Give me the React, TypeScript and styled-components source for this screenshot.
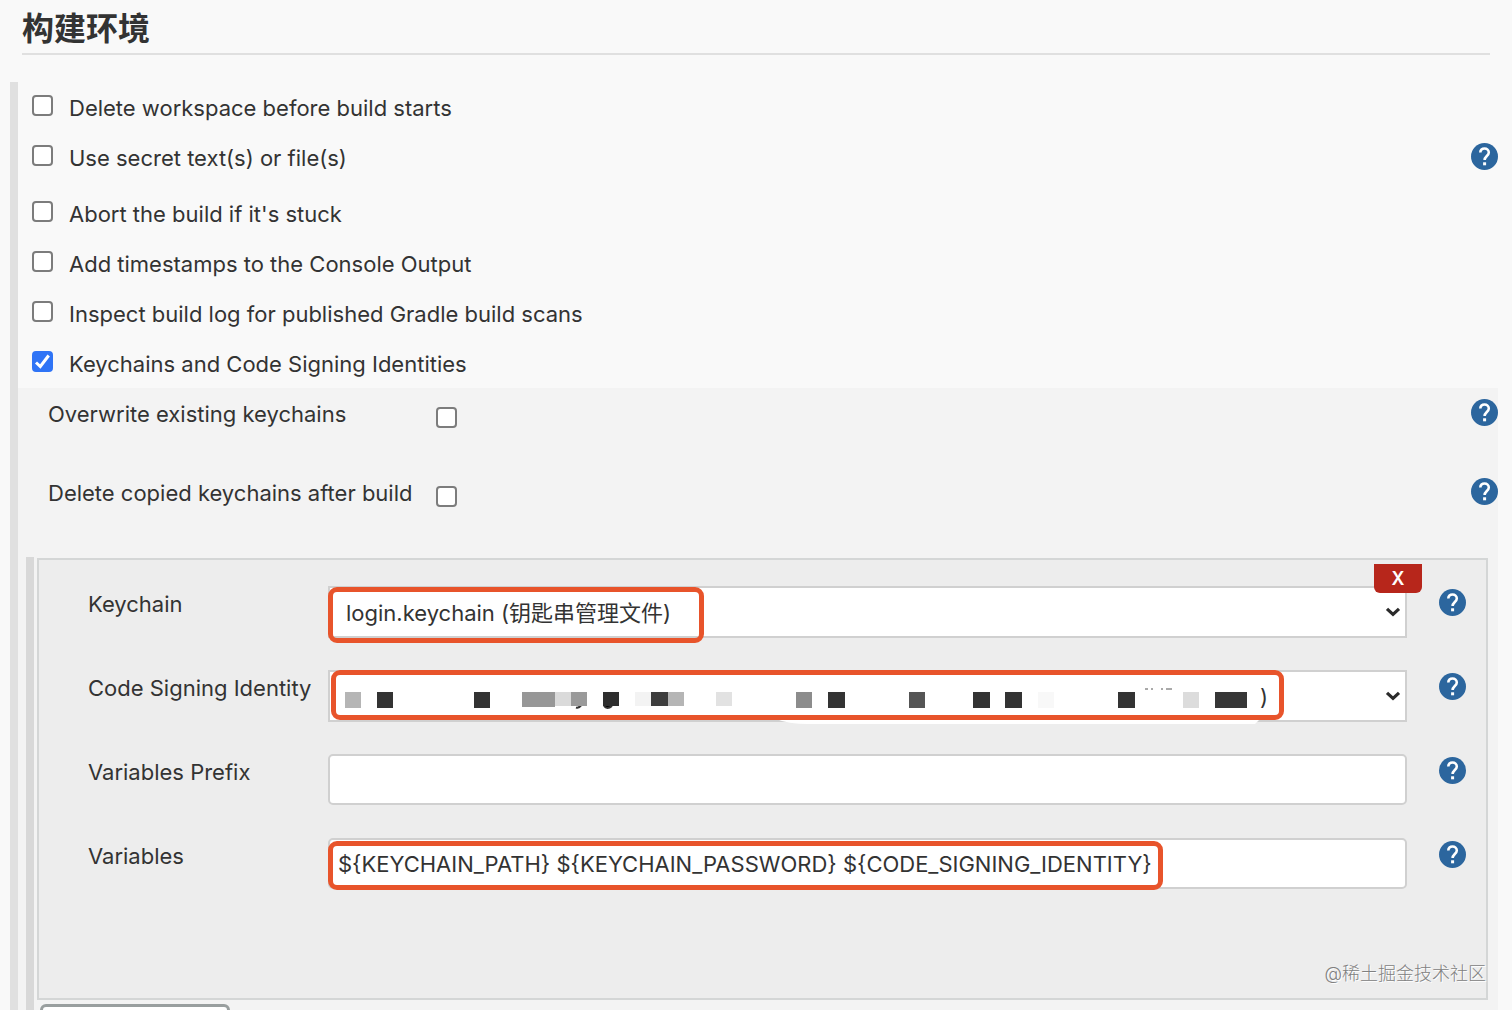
import React, { useState } from "react";
import styled, { createGlobalStyle } from "styled-components";

const GlobalStyle = createGlobalStyle`
  *, *::before, *::after { box-sizing: border-box; }
  body {
    margin: 0;
    background: #f9f9f9;
    color: #333;
    font-family: Inter, "Noto Sans CJK SC", sans-serif;
    font-size: 22px;
    line-height: 32px;
  }
  button, input, select { font: inherit; color: inherit; }
`;

const Page = styled.main`
  height: 100vh;
  overflow: hidden;
  padding: 0 14px 0 10px;
`;

const Heading = styled.h2`
  margin: 0 8px 27px 12px;
  padding: 5px 0 0;
  height: 55px;
  border-bottom: 2px solid #e0e0e0;
  font-size: 32px;
  line-height: 48px;
  font-weight: 700;
`;

const Section = styled.section`
  border-left: 8px solid #e0e0e0;
`;

const OptionRow = styled.div<{ $tall?: boolean }>`
  display: flex;
  justify-content: space-between;
  align-items: flex-start;
  height: ${(p) => (p.$tall ? 56 : 50)}px;
  padding: 10px 0 0 14px;
`;

const OptionLabel = styled.label`
  display: flex;
  gap: 16px;
`;

const TickFrame = styled.span`
  display: grid;
  width: 21px;
  height: 21px;
  margin-top: 3px;
  & > * { grid-area: 1 / 1; }
  svg { pointer-events: none; }
`;

const TickInput = styled.input`
  appearance: none;
  width: 21px;
  height: 21px;
  margin: 0;
  border: 2px solid #7c7c7c;
  border-radius: 4px;
  background: #fff;
  &:checked {
    border-color: #2f74f6;
    background: #2f74f6;
  }
`;

const HelpButton = styled.button`
  flex: none;
  display: block;
  width: 27px;
  height: 27px;
  margin: 1px 0 0;
  padding: 0;
  border: 0;
  background: none;
  cursor: pointer;
  svg { display: block; }
`;

const Details = styled.div`
  padding-left: 8px;
  background: #f3f3f3;
`;

const SettingRow = styled.div`
  display: grid;
  grid-template-columns: 388px 1fr auto;
  align-items: start;
  height: 79px;
  padding: 10px 0 0 22px;
`;

const SettingTick = styled.div`
  padding-top: 6px;
`;

const Chunks = styled.div`
  margin-top: 11px;
  padding: 1px 10px 20px 3px;
  border-left: 8px solid #d8d8d8;
`;

const Chunk = styled.div`
  position: relative;
  display: flex;
  flex-direction: column;
  gap: 33px;
  padding: 26px 20px 109px 49px;
  border: 2px solid #d4d6d6;
  background: #ededed;
`;

const Field = styled.div`
  display: grid;
  grid-template-columns: 240px 1fr 27px;
  align-items: start;
  line-height: 36px;
  ${HelpButton} { margin-top: 3px; }
`;

const Control = styled.div`
  position: relative;
  margin-right: 32px;
`;

const Select = styled.select`
  appearance: none;
  display: block;
  width: 100%;
  height: 52px;
  padding: 2px 48px 0 16px;
  border: 2px solid #d0d0d0;
  border-radius: 0;
  background: #fff;
`;

const TextInput = styled.input`
  display: block;
  width: 100%;
  height: 51px;
  padding: 0 8px;
  border: 2px solid #d0d0d0;
  border-radius: 5px;
  background: #fff;
`;

const SelectField = styled(Field)`
  margin-bottom: -1px;
`;

const Chevron = styled.svg`
  position: absolute;
  right: 6px;
  top: 20px;
  pointer-events: none;
`;

const Highlight = styled.div<{ $x: number; $y: number; $w: number; $h: number }>`
  position: absolute;
  left: ${(p) => p.$x}px;
  top: ${(p) => p.$y}px;
  width: ${(p) => p.$w}px;
  height: ${(p) => p.$h}px;
  border: 5px solid #e8542b;
  border-radius: 9px;
  pointer-events: none;
`;

const Redaction = styled.div`
  position: absolute;
  left: 0;
  top: 0;
  display: flex;
  pointer-events: none;
  svg { display: block; }
`;

const RedactionTail = styled.span`
  padding-top: 9px;
`;

const DeleteButton = styled.button`
  position: absolute;
  z-index: 1;
  top: 4px;
  right: 64px;
  width: 48px;
  height: 29px;
  padding: 0;
  border: 0;
  border-radius: 0 0 6px 6px;
  background: #b7261b;
  color: #fff;
  font-size: 18px;
  line-height: 29px;
  font-weight: 600;
`;

const AddButton = styled.button`
  display: block;
  width: 190px;
  height: 50px;
  margin: 4px 0 0 3px;
  border: 3px solid #999f9f;
  border-radius: 6px;
  background: #fff;
`;

const Watermark = styled.div`
  position: absolute;
  right: 0;
  bottom: 8px;
  color: #808080;
  font-size: 18px;
  font-weight: 300;
  text-shadow: 1px 1px 0 #fff;
`;

function Tick({ id, initial = false }: { id: string; initial?: boolean }) {
  const [on, setOn] = useState(initial);
  return (
    <TickFrame>
      <TickInput id={id} type="checkbox" checked={on} onChange={(e) => setOn(e.target.checked)} />
      {on && (
        <svg width="21" height="21" viewBox="0 0 21 21" fill="none" stroke="#fff" strokeWidth="3" aria-hidden="true">
          <path d="M4 11.5l4.3 4L16.7 4.5" />
        </svg>
      )}
    </TickFrame>
  );
}

function Help({ topic }: { topic: string }) {
  return (
    <HelpButton type="button" aria-label={`Help for feature: ${topic}`}>
      <svg width="27" height="27" viewBox="0 0 27 27" fill="none">
        <circle cx="13.5" cy="13.5" r="13.5" fill="#2c669e" />
        <path
          d="M9.3 9.6c0-2.6 1.8-4.1 4.2-4.1s4.3 1.6 4.3 4c0 3.3-4.2 3.8-4.2 7.6"
          stroke="#fff"
          strokeWidth="2.6"
        />
        <rect x="12.1" y="19.3" width="3" height="3" fill="#fff" />
      </svg>
    </HelpButton>
  );
}

function Arrow() {
  return (
    <Chevron width="16" height="12" viewBox="0 0 16 12" fill="none" stroke="#2b2b2b" strokeWidth="3.2" aria-hidden="true">
      <path d="M2 2.8l6 5.6 6-5.6" />
    </Chevron>
  );
}

const OPTIONS = [
  { label: "Delete workspace before build starts" },
  { label: "Use secret text(s) or file(s)", help: true },
  { label: "Abort the build if it's stuck" },
  { label: "Add timestamps to the Console Output" },
  { label: "Inspect build log for published Gradle build scans" },
  { label: "Keychains and Code Signing Identities", on: true },
];

const SETTINGS = ["Overwrite existing keychains", "Delete copied keychains after build"];

/* x, width, height and shade of each block that hides the identity */
const BLOCKS: [number, number, number, string][] = [
  [17, 16, 16, "#b5b5b5"], [49, 16, 16, "#333"], [146, 16, 16, "#333"], [194, 33, 15, "#979797"],
  [227, 16, 14, "#dadada"], [243, 16, 14, "#9a9a9a"], [275, 16, 14, "#2e2e2e"], [307, 16, 14, "#f3f3f3"],
  [323, 17, 14, "#3d3d3d"], [340, 16, 14, "#b5b5b5"], [388, 16, 14, "#e2e2e2"], [468, 16, 16, "#8c8c8c"],
  [500, 17, 16, "#333"], [581, 16, 16, "#555"], [645, 17, 16, "#333"], [677, 17, 16, "#333"],
  [710, 16, 16, "#f8f8f8"], [790, 17, 16, "#333"], [855, 16, 16, "#dcdcdc"], [887, 32, 16, "#363636"],
];

export default function App() {
  return (
    <>
      <GlobalStyle />
      <Page>
        <Heading>构建环境</Heading>
        <Section>
          {OPTIONS.map((o, i) => (
            <OptionRow key={o.label} $tall={o.help}>
              <OptionLabel htmlFor={`option-${i}`}>
                <Tick id={`option-${i}`} initial={o.on} />
                {o.label}
              </OptionLabel>
              {o.help && <Help topic={o.label} />}
            </OptionRow>
          ))}
          <Details>
            {SETTINGS.map((s, i) => (
              <SettingRow key={s}>
                <label htmlFor={`setting-${i}`}>{s}</label>
                <SettingTick>
                  <Tick id={`setting-${i}`} />
                </SettingTick>
                <Help topic={s} />
              </SettingRow>
            ))}
            <Chunks>
              <Chunk>
                <DeleteButton type="button">X</DeleteButton>
                <SelectField>
                  <label htmlFor="keychain">Keychain</label>
                  <Control>
                    <Select id="keychain">
                      <option>login.keychain (钥匙串管理文件)</option>
                    </Select>
                    <Arrow />
                    <Highlight $x={0} $y={1} $w={376} $h={56} />
                  </Control>
                  <Help topic="Keychain" />
                </SelectField>
                <SelectField>
                  <label htmlFor="identity">Code Signing Identity</label>
                  <Control>
                    <Select id="identity">
                      <option></option>
                    </Select>
                    <Arrow />
                    <Redaction>
                      <svg width="932" height="55" viewBox="0 0 932 55" aria-hidden="true">
                        <path d="M448 49H932l-5 5H480q-20 0-32-5z" fill="#fff" />
                        <path
                          d="M248 37.5q3 1 5-2M276 36q3 4 8 0"
                          stroke="#333"
                          strokeWidth="2"
                        />
                        {BLOCKS.map(([x, w, h, fill]) => (
                          <rect key={x} x={x} y={22} width={w} height={h} fill={fill} />
                        ))}
                        <path d="M817 19h3m3 0h2m8 0h2m3 0h6" stroke="#555" strokeWidth="1" />
                      </svg>
                      <RedactionTail>)</RedactionTail>
                    </Redaction>
                    <Highlight $x={3} $y={0} $w={953} $h={50} />
                  </Control>
                  <Help topic="Code Signing Identity" />
                </SelectField>
                <Field>
                  <label htmlFor="prefix">Variables Prefix</label>
                  <Control>
                    <TextInput id="prefix" type="text" />
                  </Control>
                  <Help topic="Variables Prefix" />
                </Field>
                <Field>
                  <label htmlFor="variables">Variables</label>
                  <Control>
                    <TextInput
                      id="variables"
                      type="text"
                      defaultValue="${KEYCHAIN_PATH} ${KEYCHAIN_PASSWORD} ${CODE_SIGNING_IDENTITY}"
                    />
                    <Highlight $x={0} $y={3} $w={835} $h={49} />
                  </Control>
                  <Help topic="Variables" />
                </Field>
                <Watermark>@稀土掘金技术社区</Watermark>
              </Chunk>
              <AddButton type="button" aria-label="Add keychain" />
            </Chunks>
          </Details>
        </Section>
      </Page>
    </>
  );
}
